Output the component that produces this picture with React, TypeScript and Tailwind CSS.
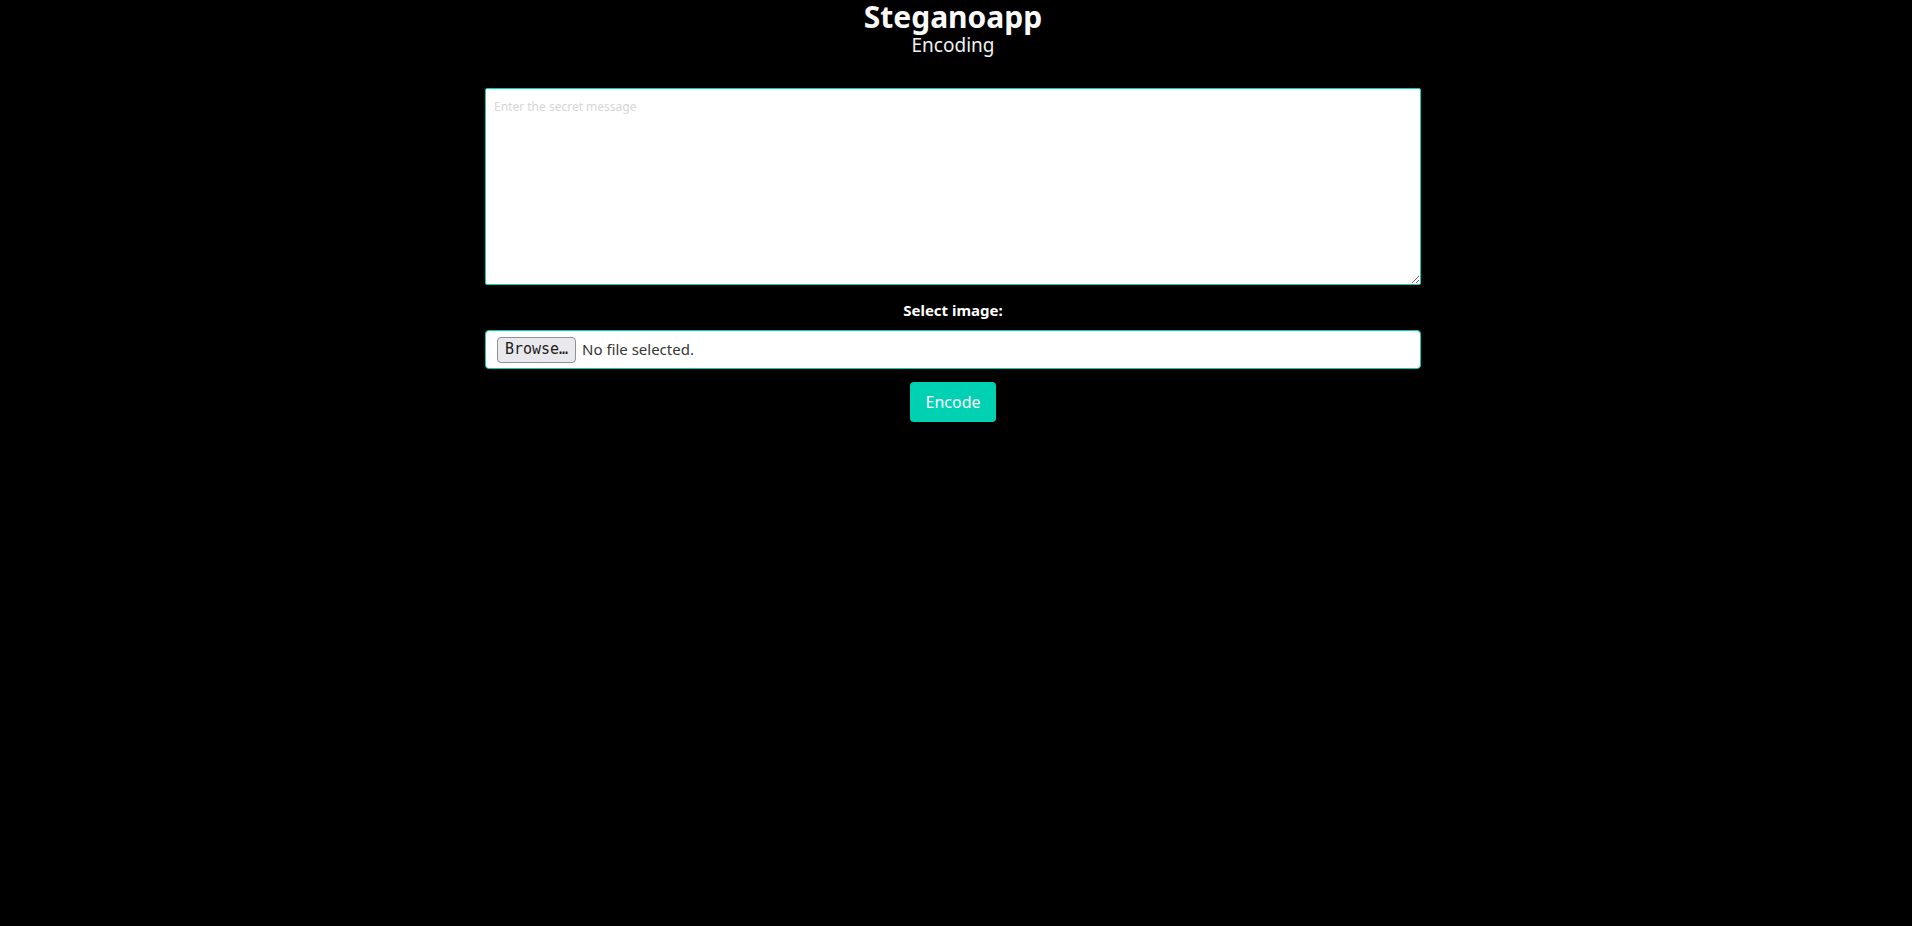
export default function App() {
  const font = { fontFamily: '"Noto Sans", "Open Sans", sans-serif' };
  return (
    <div className="min-h-screen bg-black pr-[6px] text-white" style={font}>
      <div className="mx-auto w-[936px]">
        <div className="flex flex-col items-center">
          <h1 className="text-[30px] font-bold leading-[34px] text-[#fafafa]">Steganoapp</h1>
          <h2 className="text-[19px] leading-[22px] text-[#f2f2f2]">Encoding</h2>
        </div>

        <form className="mt-[32px] flex flex-col items-center" onSubmit={e => e.preventDefault()}>
          <textarea
            placeholder="Enter the secret message"
            className="block h-[197px] w-full resize-y rounded-[2px] border border-[#00d1b2] bg-white px-[8px] py-[9px] text-[12px] text-[#363636] outline-none placeholder:text-[#d6d6d6]"
          />

          <label className="mt-[14px] text-[15px] font-bold leading-[22px] text-white">Select image:</label>

          <div className="mt-[9px] flex h-[39px] w-full items-center rounded-[4px] border border-[#00d1b2] bg-white px-[11px]">
            <button
              type="button"
              className="h-[26px] w-[79px] rounded-[4px] border border-[#8f8f9d] bg-[#e9e9ed] text-[15px] font-medium text-[#1b1b1b]"
              style={{ fontFamily: '"DejaVu Sans Mono", monospace' }}
            >
              Browse…
            </button>
            <span className="ml-[6px] text-[15px] text-[#363636]">No file selected.</span>
          </div>

          <button
            type="submit"
            className="mt-[13px] h-[40px] w-[86px] rounded-[4px] bg-[#00d1b2] text-[16px] text-white"
          >
            Encode
          </button>
        </form>
      </div>
    </div>
  );
}
